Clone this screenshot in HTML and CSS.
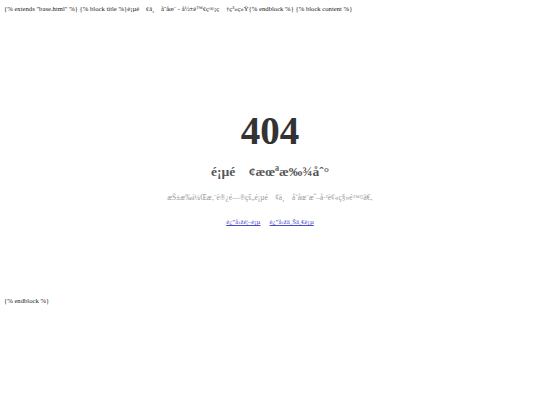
FILE: index.html
```html
<!DOCTYPE html>
<html>
<head>
<meta charset="utf-8">
<title>404</title>
<link rel="stylesheet" href="styles.css">
</head>
<body>
<span class="tpl">{% extends "base.html" %} {% block title %}é¡µé&#x2003;¢ä¸&#x2003;å­˜åœ¨ - å½±é™¢ç®¡ç&#x2003;†ç³»ç»Ÿ{% endblock %} {% block content %}</span>
<div class="error-page">
  <h1 class="code">404</h1>
  <h2 class="title">é¡µé&#x2003;¢æœªæ‰¾åˆ°</h2>
  <p class="desc">æŠ±æ­‰ï¼Œæ‚¨è®¿é—®çš„é¡µé&#x2003;¢ä¸&#x2003;å­˜åœ¨æˆ–å·²è¢«ç§»é™¤ã€‚</p>
  <div class="links">
    <a class="link" href="#">è¿”å›žé¦–é¡µ</a>
    <a class="link" href="#">è¿”å›žä¸Šä¸€é¡µ</a>
  </div>
</div>
<span class="tpl">{% endblock %}</span>
</body>
</html>
```

FILE: styles.css
```css
html, body {
  background: #ffffff;
}
body {
  margin: 4px;
  font-family: "Liberation Serif", "Times New Roman", serif;
  font-size: 6.67px;
  color: #222222;
}
.tpl {
  display: block;
  line-height: 9px;
}
.error-page {
  text-align: center;
  padding: 98px 10px 0;
  height: 283px;
  box-sizing: border-box;
}
.code {
  margin: 0;
  font-size: 39px;
  line-height: 40px;
  font-weight: bold;
  color: #333333;
}
.title {
  margin: 12px 0 0;
  font-size: 13.5px;
  line-height: 17px;
  font-weight: bold;
  color: #555555;
}
.desc {
  margin: 13px 0 0;
  font-size: 7.4px;
  line-height: 9px;
  color: #999999;
}
.links {
  margin-top: 15px;
  display: flex;
  justify-content: center;
  gap: 9px;
  font-size: 6.8px;
  line-height: 9px;
}
.link {
  color: #4a4acc;
  text-decoration: underline;
}
```
